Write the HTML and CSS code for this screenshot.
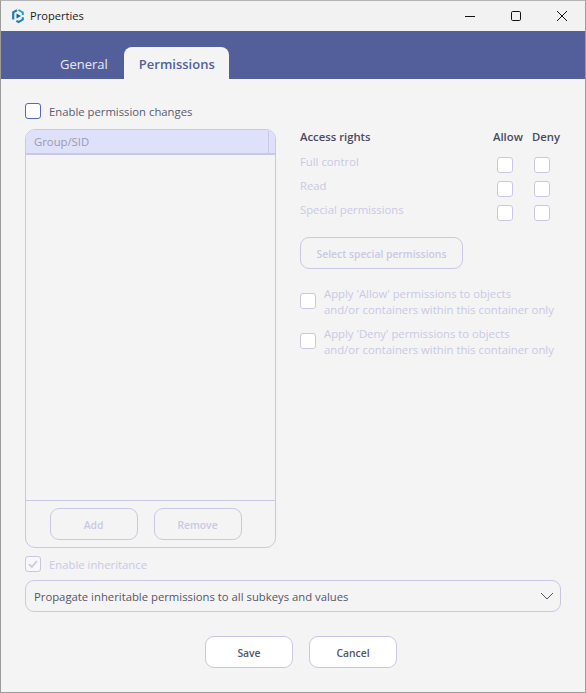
FILE: index.html
```html
<!DOCTYPE html>
<html lang="en">
<head>
  <meta charset="UTF-8">
  <meta name="viewport" content="width=device-width, initial-scale=1.0">
  <title>Properties</title>
  <link rel="stylesheet" href="styles.css">
</head>
<body>
  <div class="window">
    <div class="titlebar">
      <svg class="app-icon" width="16" height="16" viewBox="0 0 16 16">
        <path d="M7 2.2 3.2 4.4v7.2" fill="none" stroke="#1f7fb0" stroke-width="2.2"/>
        <path d="M8.5 2 12.8 4.5V7" fill="none" stroke="#2a9fc4" stroke-width="2"/>
        <path d="M12.8 9.2v2.3L8.6 14l-2.2-1.2" fill="none" stroke="#1f7fb0" stroke-width="2"/>
        <path d="M6.5 5.5 11 8l-4.5 2.6z" fill="#17688f"/>
      </svg>
      <span class="title">Properties</span>
      <div class="window-controls">
        <svg width="12" height="12" viewBox="0 0 12 12"><path d="M1 6.5h10" stroke="#111" fill="none"/></svg>
        <svg width="12" height="12" viewBox="0 0 12 12"><rect x="1.5" y="1.5" width="9" height="9" rx="1.2" stroke="#111" fill="none"/></svg>
        <svg width="12" height="12" viewBox="0 0 12 12"><path d="M1 1l10 10M11 1 1 11" stroke="#111" fill="none"/></svg>
      </div>
    </div>

    <div class="tabbar">
      <div class="tab">General</div>
      <div class="tab active">Permissions</div>
    </div>

    <div class="content">
      <label class="check-row enable-row">
        <span class="box strong"></span>
        <span>Enable permission changes</span>
      </label>

      <div class="columns">
        <div class="list-panel">
          <div class="list-header">
            <div class="list-col">Group/SID</div>
            <div class="list-col-rest"></div>
          </div>
          <div class="list-body"></div>
          <div class="list-footer">
            <button class="btn disabled">Add</button>
            <button class="btn disabled">Remove</button>
          </div>
        </div>

        <div class="rights">
          <div class="rights-grid">
            <div class="rights-title">Access rights</div>
            <div class="rights-head">Allow</div>
            <div class="rights-head deny">Deny</div>

            <div class="muted">Full control</div>
            <span class="box"></span>
            <span class="box"></span>

            <div class="muted">Read</div>
            <span class="box"></span>
            <span class="box"></span>

            <div class="muted">Special permissions</div>
            <span class="box"></span>
            <span class="box"></span>
          </div>

          <button class="btn disabled special-btn">Select special permissions</button>

          <label class="check-row apply-row muted">
            <span class="box"></span>
            <span>Apply 'Allow' permissions to objects<br>and/or containers within this container only</span>
          </label>
          <label class="check-row apply-row muted">
            <span class="box"></span>
            <span>Apply 'Deny' permissions to objects<br>and/or containers within this container only</span>
          </label>
        </div>
      </div>

      <label class="check-row inherit-row muted">
        <span class="box checked">
          <svg width="14" height="14" viewBox="0 0 14 14"><path d="M3 7.2l2.8 2.8L11 4" fill="none" stroke="#c9c9e2" stroke-width="1.8"/></svg>
        </span>
        <span>Enable inheritance</span>
      </label>

      <div class="combo">
        <span>Propagate inheritable permissions to all subkeys and values</span>
        <svg width="14" height="8" viewBox="0 0 14 8"><path d="M1 1l6 6 6-6" fill="none" stroke="#55556a"/></svg>
      </div>

      <div class="actions">
        <button class="btn">Save</button>
        <button class="btn">Cancel</button>
      </div>
    </div>
  </div>
</body>
</html>
```

FILE: styles.css
```css
body {
  font-family: "Open Sans", "Noto Sans", sans-serif;
  font-size: 11.3px;
  color: #4a4a5e;
  margin: 0;
  padding: 0;
  overflow: hidden;
}

.window {
  width: 586px;
  height: 693px;
  box-sizing: border-box;
  border: 1px solid #9c9c9c;
  border-top-color: #b4b4b4;
  background-color: #f4f4f4;
  display: flex;
  flex-direction: column;
}

.titlebar {
  height: 30px;
  display: flex;
  align-items: center;
  background-color: #f2f2f2;
  padding-left: 9px;
  color: #1a1a1a;
  flex-shrink: 0;
}

.app-icon {
  margin-right: 4px;
}

.title {
  font-size: 11.1px;
  padding-bottom: 2px;
}

.window-controls {
  margin-left: auto;
  display: flex;
  gap: 34px;
  padding-right: 17px;
}

.tabbar {
  height: 48px;
  background-color: #535f9b;
  display: flex;
  align-items: flex-end;
  padding-left: 44px;
  flex-shrink: 0;
}

.tab {
  height: 32px;
  padding: 2px 15px 0;
  box-sizing: border-box;
  display: flex;
  align-items: center;
  font-size: 13px;
  color: #e8e9f4;
}

.tab.active {
  background-color: #f4f4f4;
  color: #535f9b;
  font-weight: 600;
  border-radius: 8px 8px 0 0;
  margin-left: 1px;
  padding-right: 14px;
}

.content {
  padding: 24px 24px 0;
  display: flex;
  flex-direction: column;
}

.box {
  width: 16px;
  height: 16px;
  box-sizing: border-box;
  border: 1px solid #c8c8e4;
  border-radius: 3px;
  background-color: #fff;
  display: inline-flex;
  align-items: center;
  justify-content: center;
  flex-shrink: 0;
}

.box.strong {
  border-color: #5a66b4;
}

.box.checked {
  background-color: #f8f8f8;
}

.check-row {
  display: flex;
  align-items: center;
  gap: 8px;
}

.muted {
  color: #c9c9e4;
}

.enable-row {
  height: 16px;
  color: #5a5a70;
}

.columns {
  display: flex;
  gap: 24px;
  margin-top: 10px;
}

.list-panel {
  width: 251px;
  height: 419px;
  box-sizing: border-box;
  border: 1px solid #c8c8e4;
  border-radius: 10px;
  display: flex;
  flex-direction: column;
  overflow: hidden;
}

.list-header {
  height: 25px;
  flex-shrink: 0;
  display: flex;
  box-sizing: border-box;
  background-color: #dfe1fb;
  border-bottom: 2px solid #c8c8e4;
  color: #9a9ab0;
}

.list-col {
  flex: 1;
  padding-left: 8px;
  display: flex;
  align-items: center;
  border-right: 1px solid #c8c8e4;
}

.list-col-rest {
  width: 6px;
}

.list-body {
  flex: 1;
}

.list-footer {
  height: 47px;
  flex-shrink: 0;
  box-sizing: border-box;
  border-top: 1px solid #c8c8e4;
  display: flex;
  justify-content: center;
  gap: 16px;
  padding: 7px 10px 0 0;
}

.btn {
  width: 88px;
  height: 32px;
  box-sizing: border-box;
  border: 1px solid #c8c8e4;
  border-radius: 9px;
  background-color: #fff;
  font-family: inherit;
  font-size: 10.35px;
  font-weight: 600;
  color: #55556a;
  padding: 1px 0 0;
}

.btn.disabled {
  background-color: transparent;
  color: #c9c9e4;
}

.rights {
  width: 261px;
}

.rights-grid {
  display: grid;
  grid-template-columns: 197px 37px 16px;
  grid-auto-rows: 24px;
  align-items: center;
  margin-top: -3px;
}

.rights-grid .box {
  margin-top: 5px;
}

.rights-grid .muted {
  margin-top: -2px;
}

.rights-title {
  font-weight: 600;
  color: #4a4a5e;
  margin-top: -4px;
}

.rights-head {
  font-weight: 600;
  color: #4a4a5e;
  white-space: nowrap;
  margin: -4px 0 0 -4px;
}

.rights-head.deny {
  margin-left: -2px;
}

.special-btn {
  width: 163px;
  display: block;
  margin-top: 15px;
}

.apply-row {
  line-height: 16px;
  margin-top: 8px;
}

.apply-row .box {
  margin-top: -2px;
}

.special-btn + .apply-row {
  margin-top: 17px;
}

.inherit-row {
  height: 16px;
  margin-top: 8px;
}

.combo {
  width: 536px;
  height: 32px;
  box-sizing: border-box;
  margin-top: 8px;
  border: 1px solid #c8c8e4;
  border-radius: 9px;
  display: flex;
  align-items: center;
  justify-content: space-between;
  padding: 0 6px 0 8px;
  color: #55556a;
}

.actions {
  display: flex;
  justify-content: center;
  gap: 16px;
  margin-top: 24px;
  width: 536px;
  padding-left: 16px;
  box-sizing: border-box;
}
```
